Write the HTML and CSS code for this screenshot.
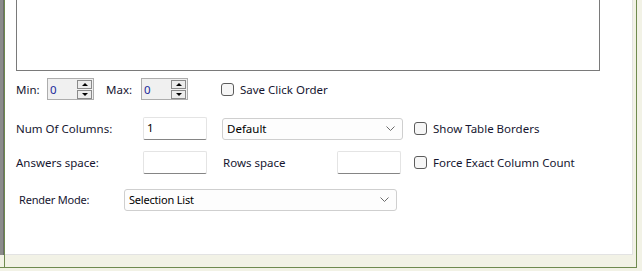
FILE: index.html
```html
<!DOCTYPE html>
<html lang="en">
<head>
    <meta charset="UTF-8">
    <title>Question Properties</title>
    <link rel="stylesheet" href="styles.css">
</head>
<body>
    <div class="window">
        <div class="gutter"></div>
        <div class="frame">
            <div class="panel">
                <div class="answers-box"></div>

                <div class="row row-limits">
                    <span class="label label-min">Min:</span>
                    <div class="spinner">
                        <span class="spin-value">0</span>
                        <div class="spin-buttons">
                            <span class="spin-btn up"></span>
                            <span class="spin-btn down"></span>
                        </div>
                    </div>
                    <span class="label label-max">Max:</span>
                    <div class="spinner">
                        <span class="spin-value">0</span>
                        <div class="spin-buttons">
                            <span class="spin-btn up"></span>
                            <span class="spin-btn down"></span>
                        </div>
                    </div>
                    <label class="check check-save"><span class="box"></span>Save Click Order</label>
                </div>

                <div class="row row-columns">
                    <span class="label label-wide">Num Of Columns:</span>
                    <div class="textbox">1</div>
                    <div class="select select-layout">
                        <span>Default</span>
                        <svg class="chevron" width="9" height="5" viewBox="0 0 9 5"><polyline points="0.5,0.5 4.5,4.5 8.5,0.5" fill="none" stroke="#6b6b6b" stroke-width="1"/></svg>
                    </div>
                    <label class="check"><span class="box"></span>Show Table Borders</label>
                </div>

                <div class="row row-spacing">
                    <span class="label label-wide">Answers space:</span>
                    <div class="textbox"></div>
                    <span class="label label-rows">Rows space</span>
                    <div class="textbox"></div>
                    <label class="check check-force"><span class="box"></span>Force Exact Column Count</label>
                </div>

                <div class="row row-render">
                    <span class="label label-render">Render Mode:</span>
                    <div class="select select-render">
                        <span>Selection List</span>
                        <svg class="chevron" width="9" height="5" viewBox="0 0 9 5"><polyline points="0.5,0.5 4.5,4.5 8.5,0.5" fill="none" stroke="#6b6b6b" stroke-width="1"/></svg>
                    </div>
                </div>
            </div>
        </div>
    </div>
</body>
</html>
```

FILE: styles.css
```css
/* base */
body {
    margin: 0;
    background-color: #f2f2e6;
    font-family: "Noto Sans", "Liberation Sans", sans-serif;
    font-size: 11.5px;
    color: #161630;
    overflow: hidden;
}

/* window frame */
.window {
    display: flex;
    width: 637px;
    height: 268px;
    border-right: 1px solid #6f8a4f;
    border-bottom: 1px solid #6f8a4f;
    box-sizing: border-box;
}

.gutter {
    width: 4px;
    height: 255px;
    background-color: #8c8c8c;
    border-right: 1px solid #6e6e6e;
    box-sizing: border-box;
}

.frame {
    flex: 1;
    border-left: 1px solid #6f8a4f;
    background-color: #f2f2e6;
}

.panel {
    width: 628px;
    height: 255px;
    background-color: #fff;
    border-right: 1px solid #e3e3e3;
    border-bottom: 1px solid #e3e3e3;
    box-sizing: border-box;
    padding-left: 11px;
}

.answers-box {
    width: 584px;
    height: 71px;
    border: 1px solid #7a7a7a;
    border-top: none;
    box-sizing: border-box;
}

/* rows */
.row {
    display: flex;
    align-items: center;
}

.row-limits { margin-top: 7px; height: 22px; }
.row-columns { margin-top: 17px; height: 23px; }
.row-spacing { margin-top: 11px; height: 23px; }
.row-render { margin-top: 14px; height: 23px; font-size: 11px; letter-spacing: -0.2px; }

.label { white-space: nowrap; }
.label-min { width: 31px; }
.label-max { width: 35px; margin-left: 12px; }
.label-wide { width: 127px; }
.label-rows { width: 114px; margin-left: 16px; }
.label-render { width: 105px; padding-left: 3px; }

/* numeric up/down */
.spinner {
    display: flex;
    align-items: center;
    justify-content: space-between;
    width: 47px;
    height: 22px;
    border: 1px solid #adadad;
    background-color: #f0f0f0;
    box-sizing: border-box;
    padding: 0 1px 0 2px;
}

.spin-value { color: #1a2a9a; }

.spin-buttons {
    display: flex;
    flex-direction: column;
    gap: 1px;
}

.spin-btn {
    position: relative;
    width: 15px;
    height: 9px;
    border: 1px solid #8a8a8a;
    background-color: #ececec;
    box-sizing: border-box;
}

.spin-btn::after {
    content: '';
    position: absolute;
    left: 4px;
    top: 2px;
    border-left: 3px solid transparent;
    border-right: 3px solid transparent;
}

.spin-btn.up::after { border-bottom: 3px solid #000; }
.spin-btn.down::after { border-top: 3px solid #000; }

/* text inputs */
.textbox {
    width: 64px;
    height: 23px;
    border: 1px solid #e4e4e4;
    border-bottom-color: #858585;
    border-radius: 2px;
    box-sizing: border-box;
    padding: 2px 0 0 3px;
    color: #000;
}

/* combo boxes */
.select {
    display: flex;
    align-items: center;
    justify-content: space-between;
    height: 22px;
    border: 1px solid #cfcfcf;
    border-radius: 3px;
    background-color: #fdfdfd;
    box-sizing: border-box;
    padding: 0 7px 0 4px;
    color: #000;
}

.select-layout { width: 181px; margin-left: 15px; }
.select-render { width: 273px; }

/* check boxes */
.check {
    display: flex;
    align-items: center;
    gap: 6px;
    margin-left: 11px;
    white-space: nowrap;
}

.check-save { margin-left: 33px; }
.check-force { margin-left: 13px; }

.box {
    width: 13px;
    height: 13px;
    border: 1px solid #5c5c5c;
    border-radius: 3px;
    background-color: #f6f6f6;
    box-sizing: border-box;
}
```
